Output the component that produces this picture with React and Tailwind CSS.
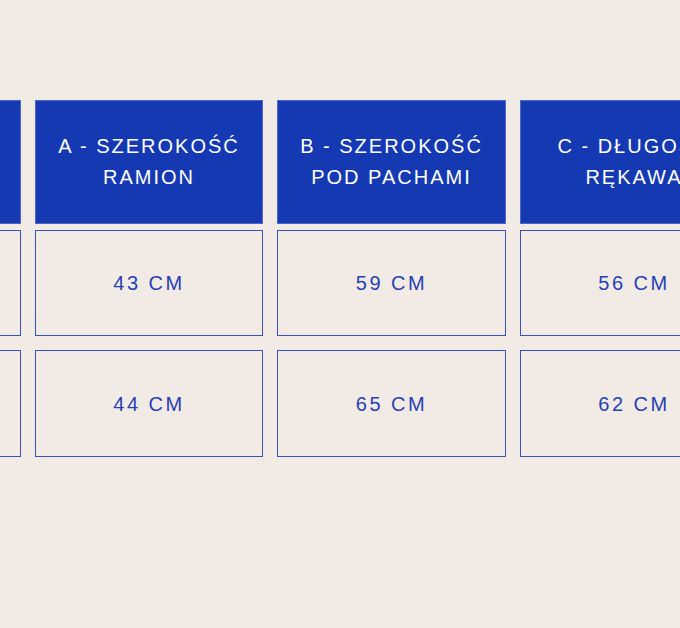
export default function App() {
  const cols = [
    { w: "w-[228px]", head: ["", ""], a: "", b: "" },
    { w: "w-[228px]", head: ["A - SZEROKOŚĆ", "RAMION"], a: "43 CM", b: "44 CM" },
    { w: "w-[229px]", head: ["B - SZEROKOŚĆ", "POD PACHAMI"], a: "59 CM", b: "65 CM" },
    { w: "w-[228px]", head: ["C - DŁUGOŚĆ", "RĘKAWA"], a: "56 CM", b: "62 CM" },
  ];
  return (
    <div
      className="w-[680px] h-[628px] overflow-hidden bg-[#f2ebe5] pt-[100px]"
      style={{ fontFamily: '"Liberation Sans", Arial, sans-serif' }}
    >
      <div className="flex gap-x-[14px] ml-[-207px]">
        {cols.map((c, i) => (
          <div key={i} className={`flex flex-col shrink-0 ${c.w}`}>
            <div className="h-[124px] bg-[#1539b3] border border-[#4d66c6] flex flex-col items-center justify-center text-white text-[20px] leading-[31px] tracking-[2px] text-center">
              {c.head[0] && <span>{c.head[0]}</span>}
              {c.head[1] && <span>{c.head[1]}</span>}
            </div>
            <div className="mt-[6px] h-[106px] border border-[#3652bf] flex items-center justify-center text-[#2641b4] text-[20px] tracking-[2.5px]">
              {c.a}
            </div>
            <div className="mt-[14px] h-[107px] border border-[#3652bf] flex items-center justify-center text-[#2641b4] text-[20px] tracking-[2.5px]">
              {c.b}
            </div>
          </div>
        ))}
      </div>
    </div>
  );
}
